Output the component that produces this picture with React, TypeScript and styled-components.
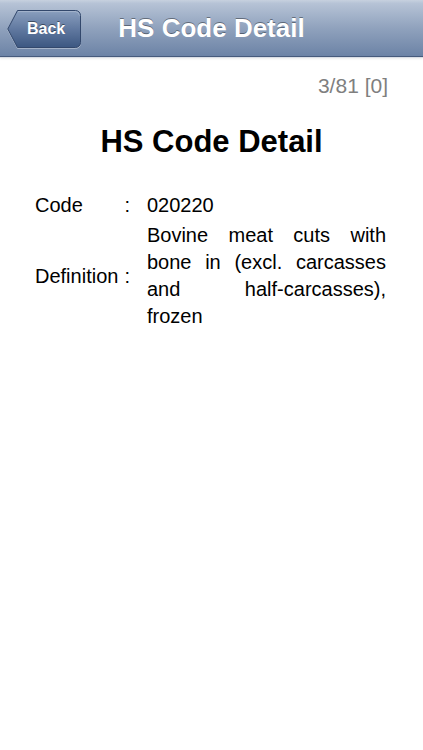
import styled, { createGlobalStyle } from 'styled-components';

const GlobalStyle = createGlobalStyle`
  html, body {
    margin: 0;
    padding: 0;
    background: #ffffff;
  }
  body {
    font-family: "Liberation Sans", Helvetica, Arial, sans-serif;
    color: #000000;
  }
`;

interface IDetailRow {
  label: string;
  value: string;
  multiline?: boolean;
}

const rows: IDetailRow[] = [
  { label: 'Code', value: '020220' },
  {
    label: 'Definition',
    value: 'Bovine meat cuts with bone in (excl. carcasses and half-carcasses), frozen',
    multiline: true,
  },
];

const App = () => {
  return (
    <>
      <GlobalStyle />
      <StyledScreen>
        <StyledNavBar>
          <StyledNavSide>
            <StyledBackButton type="button">
              <StyledBackShape viewBox="0 0 74 38" preserveAspectRatio="none">
                <defs>
                  <linearGradient id="backFill" x1="0" y1="0" x2="0" y2="1">
                    <stop offset="0" stopColor="#8a9fbe" />
                    <stop offset="0.5" stopColor="#6179a0" />
                    <stop offset="1" stopColor="#3c5781" />
                  </linearGradient>
                </defs>
                <path
                  d="M10.5 0.5 H68.5 A5 5 0 0 1 73.5 5.5 V32.5 A5 5 0 0 1 68.5 37.5 H10.5 L0.8 19 Z"
                  fill="url(#backFill)"
                  stroke="#33486c"
                  strokeWidth="1"
                />
                <path
                  d="M11 1.6 H68.5 A4 4 0 0 1 72.4 5.5"
                  fill="none"
                  stroke="rgba(255,255,255,0.25)"
                  strokeWidth="1"
                />
              </StyledBackShape>
              <StyledBackLabel>Back</StyledBackLabel>
            </StyledBackButton>
          </StyledNavSide>
          <StyledNavTitle>HS Code Detail</StyledNavTitle>
          <StyledNavSide />
        </StyledNavBar>

        <StyledContent>
          <StyledCounter>3/81 [0]</StyledCounter>
          <StyledHeading>HS Code Detail</StyledHeading>
          <StyledDetailTable>
            {rows.map((row) => (
              <StyledDetailRow key={row.label}>
                <StyledLabel>{row.label}</StyledLabel>
                <StyledColon>:</StyledColon>
                <StyledValue multiline={row.multiline}>{row.value}</StyledValue>
              </StyledDetailRow>
            ))}
          </StyledDetailTable>
        </StyledContent>
      </StyledScreen>
    </>
  );
};

const StyledScreen = styled.div`
  width: 100%;
  min-height: 750px;
  background: #ffffff;
`;

const StyledNavBar = styled.header`
  position: relative;
  display: grid;
  grid-template-columns: 1fr auto 1fr;
  align-items: center;
  height: 56px;
  background: linear-gradient(to bottom, #c7d1df 0%, #b6c3d6 6%, #90a2bd 50%, #6c83a6 100%);
  border-bottom: 1px solid #465a7c;
  box-shadow: 0 1px 0 #d9dde4, 0 2px 2px rgba(0, 0, 0, 0.08);
`;

const StyledNavSide = styled.div`
  display: flex;
  align-items: center;
  padding-left: 7px;
`;

const StyledBackButton = styled.button`
  position: relative;
  display: flex;
  align-items: center;
  width: 74px;
  height: 38px;
  margin-top: 1px;
  padding: 0 16px 0 20px;
  border: none;
  background: transparent;
  cursor: pointer;
`;

const StyledBackShape = styled.svg`
  position: absolute;
  inset: 0;
  width: 100%;
  height: 100%;
  filter: drop-shadow(0 1px 0 rgba(255, 255, 255, 0.35));
`;

const StyledBackLabel = styled.span`
  position: relative;
  font-family: "Liberation Sans", Helvetica, Arial, sans-serif;
  font-size: 16px;
  font-weight: 700;
  color: #ffffff;
  text-shadow: 0 -1px 0 rgba(0, 0, 0, 0.45);
`;

const StyledNavTitle = styled.h1`
  margin: 0;
  font-size: 26px;
  font-weight: 700;
  line-height: 56px;
  color: #ffffff;
  white-space: nowrap;
  text-shadow: 0 -1px 0 rgba(0, 0, 0, 0.4);
`;

const StyledContent = styled.main`
  display: flex;
  flex-direction: column;
  padding: 17px 0 0;
`;

const StyledCounter = styled.div`
  align-self: flex-end;
  padding-right: 35px;
  font-size: 21px;
  line-height: 24px;
  color: #7f7f7f;
`;

const StyledHeading = styled.h2`
  margin: 26px 0 0;
  text-align: center;
  font-size: 31px;
  font-weight: 700;
  line-height: 36px;
`;

const StyledDetailTable = styled.div`
  display: grid;
  grid-template-columns: auto auto 1fr;
  row-gap: 3px;
  margin-top: 32px;
  padding: 0 37px 0 35px;
  font-size: 20px;
  line-height: 27px;
`;

const StyledDetailRow = styled.div`
  display: contents;
`;

const StyledLabel = styled.div`
  align-self: center;
`;

const StyledColon = styled.div`
  align-self: center;
  padding: 0 17px 0 6px;
`;

const StyledValue = styled.div<{ multiline?: boolean }>`
  text-align: ${({ multiline }) => (multiline ? 'justify' : 'left')};
`;

export default App;
